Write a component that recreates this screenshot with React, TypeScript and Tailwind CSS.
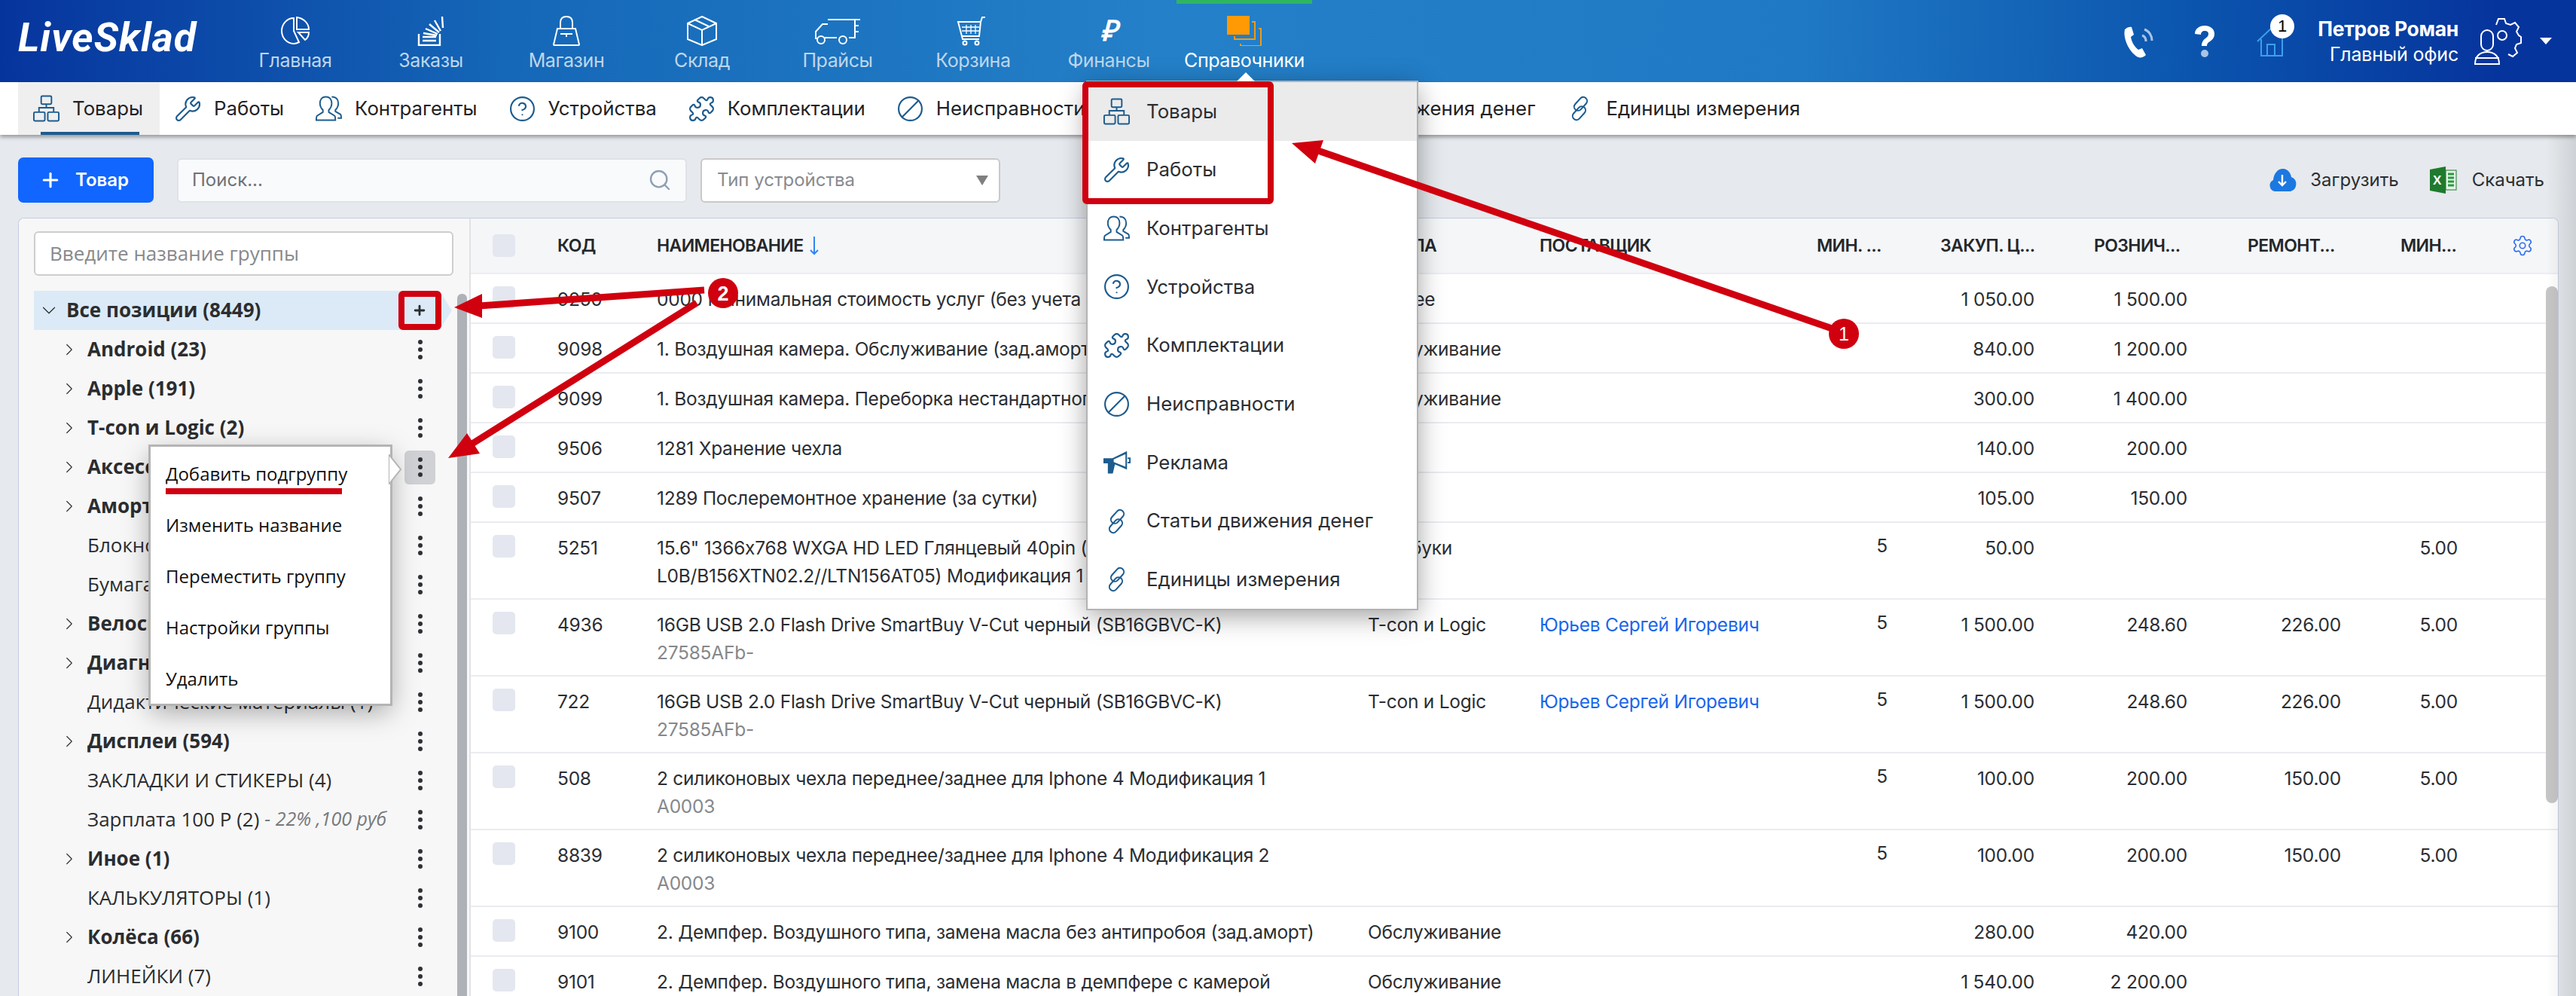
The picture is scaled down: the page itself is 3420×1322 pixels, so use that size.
import React from 'react';
import { Ban, ChevronDown, ChevronRight, CircleHelp, Plus, Puzzle, Search, Settings, Wrench } from 'lucide-react';

const proxima = "font-['Inter',sans-serif]";
const openSans = "font-['Open_Sans',sans-serif]";

// top navigation icons
function PieIcon() {
  return (
    <svg width="42" height="40" viewBox="0 0 42 40" fill="none" stroke="white" strokeWidth="2">
      <path d="M19 3C10 3 3 11 3 20s7 17 16 17c3 0 5-1 7-2l-7-15z" />
      <path d="M23 2c9 1 16 8 16 16H23z" />
      <path d="M25 22h14c0 4-2 8-5 10z" />
    </svg>
  );
}

function StackIcon() {
  return (
    <svg width="36" height="40" viewBox="0 0 36 40" fill="none" stroke="white" strokeWidth="2.4">
      <path d="M2 24v15h28V24" />
      <path d="M7 33h18M7 28h18M8 23l18 3M11 17l16 7M16 11l13 11M23 6l8 14M33 1l1 15" />
    </svg>
  );
}

function BagIcon() {
  return (
    <svg width="40" height="40" viewBox="0 0 40 40" fill="none" stroke="white" strokeWidth="2">
      <path d="M8 17h24l5 21a1 1 0 0 1-1 1H4a1 1 0 0 1-1-1z" />
      <path d="M12 17V9c0-5 3-8 8-8s8 3 8 8v8" />
      <path d="M12 24h16M20 24v4" />
    </svg>
  );
}

function BoxIcon() {
  return (
    <svg width="42" height="40" viewBox="0 0 42 40" fill="none" stroke="white" strokeWidth="2">
      <path d="M21 1l19 9v21L21 39 2 31V10z" />
      <path d="M2 10l19 9 19-9M21 19v20M11 5l19 9" />
    </svg>
  );
}

function TruckIcon() {
  return (
    <svg width="62" height="38" viewBox="0 0 62 38" fill="none" stroke="white" strokeWidth="2">
      <path d="M18 4h36v24h-8M30 28H14" />
      <path d="M18 10H11L2 20v9h3" />
      <circle cx="9" cy="31" r="5" />
      <circle cx="38" cy="31" r="5" />
      <path d="M54 4h7M54 12h5M54 20h5" />
    </svg>
  );
}

function CartIcon() {
  return (
    <svg width="44" height="40" viewBox="0 0 44 40" fill="none" stroke="white" strokeWidth="2">
      <path d="M2 8h30l-2 19H7z" />
      <path d="M32 8l2-6h4M7 27l1 4h22" />
      <path d="M13 12v12M19 12v12M25 12v12M7 15h23M7 20h23" strokeWidth="1.3" />
      <circle cx="11" cy="36" r="2.5" />
      <circle cx="27" cy="36" r="2.5" />
    </svg>
  );
}

function DirectoryIcon() {
  return (
    <svg width="46" height="40" viewBox="0 0 46 40" fill="none" stroke="#f59a0c" strokeWidth="2">
      <rect x="0" y="0" width="30" height="25" fill="#ff9a05" stroke="none" />
      <path d="M33 8h4v23H10v-4" />
      <path d="M42 17h3v23H18v-3" />
    </svg>
  );
}

// blue icons of the directory tabs
function BoxesIcon() {
  return (
    <svg width="37" height="38" viewBox="0 0 38 38" fill="none" stroke="#1d5c8f" strokeWidth="2">
      <rect x="12" y="2" width="14" height="11" rx="1.5" />
      <rect x="2" y="24" width="15" height="12" rx="1.5" />
      <rect x="21" y="24" width="15" height="12" rx="1.5" />
      <path d="M19 13v5M9 24v-6h20v6" />
    </svg>
  );
}

function PeopleIcon() {
  return (
    <svg width="37" height="38" viewBox="0 0 38 38" fill="none" stroke="#1d5c8f" strokeWidth="2">
      <path d="M15 3c-6 0-8 5-8 9 0 4 2 7 4 9v3l-8 5c-1 1-1 4-1 6h26c0-2 0-5-1-6l-8-5v-3c2-2 4-5 4-9 0-4-2-9-8-9z" />
      <path d="M23 3c6 0 9 4 9 9 0 4-2 7-4 9v2l7 4c1 1 1 3 1 5h-5" />
    </svg>
  );
}

function ChainIcon() {
  return (
    <svg width="37" height="38" viewBox="0 0 36 36" fill="none" stroke="#1d5c8f" strokeWidth="2">
      <rect x="9" y="7" width="20" height="10" rx="5" transform="rotate(-48 19 12)" />
      <rect x="7" y="19" width="20" height="10" rx="5" transform="rotate(-48 17 24)" />
    </svg>
  );
}

function Dots() {
  return (
    <span className="flex flex-col gap-[4px]">
      <span className="block h-[6px] w-[6px] rounded-full bg-[#2e3136]" />
      <span className="block h-[6px] w-[6px] rounded-full bg-[#2e3136]" />
      <span className="block h-[6px] w-[6px] rounded-full bg-[#2e3136]" />
    </span>
  );
}

const navItems = [
  { label: 'Главная', icon: <PieIcon /> },
  { label: 'Заказы', icon: <StackIcon /> },
  { label: 'Магазин', icon: <BagIcon /> },
  { label: 'Склад', icon: <BoxIcon /> },
  { label: 'Прайсы', icon: <TruckIcon /> },
  { label: 'Корзина', icon: <CartIcon /> },
  {
    label: 'Финансы',
    icon: <span className="text-[38px] leading-[40px] font-bold italic text-white font-['Liberation_Serif',serif]">₽</span>,
  },
];

const iconCls = 'w-[37px] h-[37px] text-[#1d5c8f]';

const directoryItems = [
  { label: 'Товары', icon: <BoxesIcon /> },
  { label: 'Работы', icon: <Wrench className={iconCls} strokeWidth={1.4} /> },
  { label: 'Контрагенты', icon: <PeopleIcon /> },
  { label: 'Устройства', icon: <CircleHelp className={iconCls} strokeWidth={1.4} /> },
  { label: 'Комплектации', icon: <Puzzle className={iconCls} strokeWidth={1.4} /> },
  { label: 'Неисправности', icon: <Ban className={`${iconCls} -scale-x-100`} strokeWidth={1.4} /> },
  {
    label: 'Реклама',
    icon: (
      <svg width="37" height="34" viewBox="0 0 38 34" fill="#1d5c8f" stroke="#1d5c8f" strokeWidth="2">
        <path d="M2 12h12l18-9v22l-18-8H2z" />
        <path d="M8 18h8l-3 13H8z" />
        <path d="M14 12l18-8v20l-18-7z" fill="white" />
        <path d="M34 11h3v6h-3" fill="none" />
      </svg>
    ),
  },
  { label: 'Статьи движения денег', icon: <ChainIcon /> },
  { label: 'Единицы измерения', icon: <ChainIcon /> },
];

const groups = [
  { name: 'Android (23)', bold: true },
  { name: 'Apple (191)', bold: true },
  { name: 'T-con и Logic (2)', bold: true },
  { name: 'Аксессуары (12)', bold: true, hover: true },
  { name: 'Амортизаторы (40)', bold: true },
  { name: 'Блокноты (3)' },
  { name: 'Бумага (2)' },
  { name: 'Велосипеды (5)', bold: true },
  { name: 'Диагностика (8)', bold: true },
  { name: 'Дидактические материалы (1)' },
  { name: 'Дисплеи (594)', bold: true },
  { name: 'ЗАКЛАДКИ И СТИКЕРЫ (4)' },
  { name: 'Зарплата 100 Р (2)', note: ' - 22% ,100 руб' },
  { name: 'Иное (1)', bold: true },
  { name: 'КАЛЬКУЛЯТОРЫ (1)' },
  { name: 'Колёса (66)', bold: true },
  { name: 'ЛИНЕЙКИ (7)' },
];

type Row = {
  code: string;
  name: string;
  name2?: string;
  sub?: string;
  group?: string;
  supplier?: string;
  min?: string;
  buy?: string;
  sell?: string;
  repair?: string;
  minPrice?: string;
};

const rows: Row[] = [
  { code: '9250', name: '0000 Минимальная стоимость услуг (без учета запчастей)', group: 'Прочее', buy: '1 050.00', sell: '1 500.00' },
  { code: '9098', name: '1. Воздушная камера. Обслуживание (зад.амортизатор)', group: 'Обслуживание', buy: '840.00', sell: '1 200.00' },
  { code: '9099', name: '1. Воздушная камера. Переборка нестандартного типа', group: 'Обслуживание', buy: '300.00', sell: '1 400.00' },
  { code: '9506', name: '1281 Хранение чехла', buy: '140.00', sell: '200.00' },
  { code: '9507', name: '1289 Послеремонтное хранение (за сутки)', buy: '105.00', sell: '150.00' },
  {
    code: '5251',
    name: '15.6" 1366x768 WXGA HD LED Глянцевый 40pin (N156BGE-',
    name2: 'L0B/B156XTN02.2//LTN156AT05) Модификация 1',
    group: 'Ноутбуки',
    min: '5',
    buy: '50.00',
    minPrice: '5.00',
  },
  { code: '4936', name: '16GB USB 2.0 Flash Drive SmartBuy V-Cut черный (SB16GBVC-K)', sub: '27585AFb-', group: 'T-con и Logic', supplier: 'Юрьев Сергей Игоревич', min: '5', buy: '1 500.00', sell: '248.60', repair: '226.00', minPrice: '5.00' },
  { code: '722', name: '16GB USB 2.0 Flash Drive SmartBuy V-Cut черный (SB16GBVC-K)', sub: '27585AFb-', group: 'T-con и Logic', supplier: 'Юрьев Сергей Игоревич', min: '5', buy: '1 500.00', sell: '248.60', repair: '226.00', minPrice: '5.00' },
  { code: '508', name: '2 силиконовых чехла переднее/заднее для Iphone 4 Модификация 1', sub: 'A0003', min: '5', buy: '100.00', sell: '200.00', repair: '150.00', minPrice: '5.00' },
  { code: '8839', name: '2 силиконовых чехла переднее/заднее для Iphone 4 Модификация 2', sub: 'A0003', min: '5', buy: '100.00', sell: '200.00', repair: '150.00', minPrice: '5.00' },
  { code: '9100', name: '2. Демпфер. Воздушного типа, замена масла без антипробоя (зад.аморт)', group: 'Обслуживание', buy: '280.00', sell: '420.00' },
  { code: '9101', name: '2. Демпфер. Воздушного типа, замена масла в демпфере с камерой', group: 'Обслуживание', buy: '1 540.00', sell: '2 200.00' },
];

function Header() {
  return (
    <header className="flex h-[109px] shrink-0 bg-[linear-gradient(90deg,#06349d_0%,#1568b8_20%,#2480c8_45%,#2079c4_70%,#0b55ae_85%,#06349d_97%)]">
      <div className="w-[302px] pl-[24px] pt-[20px] text-[54px] leading-[60px] font-bold italic text-white tracking-[1px] font-['Roboto',sans-serif]">
        LiveSklad
      </div>
      <nav className="flex">
        {navItems.map(item => (
          <div key={item.label} className="flex w-[180px] flex-col items-center pt-[21px]">
            <div className="flex h-[40px] items-center justify-center">{item.icon}</div>
            <div className={`mt-[4px] text-[25px] leading-[30px] text-[#bfd6ea] tracking-[-0.4px] ${proxima}`}>{item.label}</div>
          </div>
        ))}
        <div className="relative flex w-[180px] flex-col items-center border-t-[5px] border-[#2fb562] pt-[16px]">
          <DirectoryIcon />
          <div className={`mt-[4px] text-[25px] leading-[30px] text-white tracking-[-0.4px] ${proxima}`}>Справочники</div>
        </div>
      </nav>
      <div className="ml-auto flex items-center pr-[32px] text-white">
        <svg width="46" height="44" viewBox="0 0 46 44" fill="none" className="mr-[48px]">
          <path d="M3 6c3-3 7-4 9-3l3 10-4 3c1 7 5 13 10 17l5-2 5 9c-3 3-7 4-10 3C10 38 0 19 3 6z" fill="white" />
          <path d="M26 14c3 1 5 4 5 8M29 6c6 2 10 8 10 15" stroke="#a9c4e4" strokeWidth="3" />
        </svg>
        <svg width="30" height="44" viewBox="0 0 30 44" className="mr-[54px]">
          <path d="M2 12C2 5 8 1 15 1s13 4 13 11c0 5-3 8-6 10-3 2-4 3-4 6h-7c0-5 2-8 5-10 2-2 4-3 4-6s-2-4-5-4-5 2-5 5z" fill="white" />
          <ellipse cx="15" cy="38" rx="5" ry="5" fill="#a9c4e4" />
        </svg>
        <div className="relative mr-[43px] h-[40px] w-[38px]">
          <svg width="38" height="40" viewBox="0 0 38 40" fill="none" stroke="#3c9fee" strokeWidth="2">
            <path d="M1 20L20 2M6 17v22h28V12M14 39V24h10v15" />
          </svg>
          <span className="absolute -top-[16px] left-[18px] flex h-[32px] w-[32px] items-center justify-center rounded-full bg-white text-[22px] text-black font-['Liberation_Sans',sans-serif]">
            1
          </span>
        </div>
        <div className={`text-right ${proxima}`}>
          <div className="text-[26.5px] leading-[32px] font-bold tracking-[-0.3px]">Петров Роман</div>
          <div className="mt-[2px] text-[25px] leading-[32px] tracking-[-0.2px]">Главный офис</div>
        </div>
        <svg width="64" height="64" viewBox="0 0 64 64" fill="none" stroke="white" strokeWidth="2" className="ml-[20px]">
          <path d="M30 10l3-8h8l2 6 6 2 6-3 5 6-3 6 3 5 3 2v8l-6 2-2 5 3 6-6 5-6-3" />
          <circle cx="38" cy="24" r="6" />
          <rect x="10" y="17" width="16" height="27" rx="8" />
          <path d="M2 62c0-10 6-16 16-16s16 6 16 16zM2 54h32" />
        </svg>
        <span className="ml-[24px] h-0 w-0 border-x-[8px] border-t-[9px] border-x-transparent border-t-white" />
      </div>
    </header>
  );
}

function Tabs() {
  return (
    <div className={`relative z-10 flex h-[70px] shrink-0 bg-white pl-[24px] shadow-[0_3px_5px_rgba(0,0,0,0.35)] ${proxima}`}>
      {directoryItems.map((item, i) => (
        <div
          key={item.label}
          className={`relative flex h-full items-center gap-[16px] pl-[19px] pr-[22px] text-[25.8px] text-[#1f2226] ${i === 0 ? 'bg-[#efefef]' : ''}`}
        >
          {item.icon}
          <span className="whitespace-nowrap">{item.label}</span>
          {i === 0 && <span className="absolute bottom-0 left-[30px] h-[4px] w-[131px] bg-[#1d5c8f]" />}
        </div>
      ))}
    </div>
  );
}

function Toolbar() {
  return (
    <div className={`flex h-[110px] shrink-0 items-center px-[24px] pt-[10px] ${proxima}`}>
      <button className="flex h-[60px] w-[180px] items-center gap-[18px] rounded-[7px] bg-[#1066ff] pl-[28px] text-[24px] font-semibold text-white">
        <Plus className="h-[30px] w-[30px]" strokeWidth={2.5} />
        <span>Товар</span>
      </button>
      <div className="ml-[31px] flex h-[59px] w-[677px] items-center justify-between rounded-[6px] border-2 border-[#dfe2e6] bg-[#f9fafc] px-[18px] text-[24px] text-[#6d7178]">
        <span>Поиск...</span>
        <Search className="h-[32px] w-[32px] text-[#8fa0b3]" strokeWidth={1.8} />
      </div>
      <div className="ml-[18px] flex h-[59px] w-[398px] items-center justify-between rounded-[6px] border-2 border-[#c9c9c9] bg-white pl-[20px] pr-[14px] text-[24px] text-[#888b8f]">
        <span>Тип устройства</span>
        <span className="h-0 w-0 border-x-[8px] border-t-[13px] border-x-transparent border-t-[#7f7f7f]" />
      </div>
      <div className="ml-auto flex items-center pr-[18px] text-[24px] text-[#2b2e33]">
        <svg width="38" height="32" viewBox="0 0 38 32">
          <path d="M9 31a8 8 0 0 1-2-15C8 7 13 1 20 1c6 0 10 5 11 11a10 10 0 0 1-1 19z" fill="#1b78e0" />
          <path d="M19 9v14M14 18l5 5 5-5" stroke="white" strokeWidth="2.4" fill="none" />
        </svg>
        <span className="ml-[18px]">Загрузить</span>
        <svg width="36" height="36" viewBox="0 0 36 36" className="ml-[41px]">
          <path d="M0 4l21-4v36L0 32z" fill="#1f7a2e" />
          <rect x="21" y="5" width="14" height="26" fill="#e6f2e6" stroke="#1f7a2e" />
          <path d="M24 10h8M24 15h8M24 20h8M24 25h8" stroke="#2a9a40" strokeWidth="3" />
          <text x="4" y="24" fontSize="17" fontWeight="700" fill="white" fontFamily="Liberation Sans">X</text>
        </svg>
        <span className="ml-[20px]">Скачать</span>
      </div>
    </div>
  );
}

function Sidebar() {
  return (
    <aside className={`relative flex h-[1040px] w-[600px] shrink-0 flex-col overflow-hidden border-r-2 border-[#e0e2e6] bg-[#f7f7f7] pl-[20px] pt-[17px] ${openSans}`}>
      <div className="flex h-[59px] w-[557px] items-center rounded-[6px] border-2 border-[#cdcdcd] bg-white pl-[19px] text-[26px] text-[#87898c]">
        Введите название группы
      </div>
      <div className="mt-[20px] flex h-[52px] w-[555px] shrink-0 items-center bg-[#dbeaf6] pl-[5px] text-[26px] font-bold text-[#2b2d30] [clip-path:polygon(0_0,97%_0,100%_50%,97%_100%,0_100%)]">
        <ChevronDown className="h-[30px] w-[30px]" strokeWidth={1} />
        <span className="ml-[8px] -mt-[2px]">Все позиции (8449)</span>
        <Plus className="ml-auto mr-[33px] h-[20px] w-[20px]" strokeWidth={3.4} />
      </div>
      {groups.map(g => (
        <div key={g.name} className="flex h-[52px] w-[555px] shrink-0 items-center text-[26px] text-[#2b2d30]">
          <span className="flex w-[71px] justify-end pr-[11px]">
            {g.bold && <ChevronRight className="h-[26px] w-[26px] text-[#333]" strokeWidth={1.1} />}
          </span>
          <span className={`-mt-[2px] whitespace-nowrap ${g.bold ? 'font-bold' : ''}`}>{g.name}</span>
          {g.note && <span className="-mt-[2px] whitespace-nowrap pl-[7px] text-[25px] italic text-[#77797c]">{g.note}</span>}
          <span className={`ml-auto mr-[22px] flex h-[45px] w-[41px] shrink-0 items-center justify-center rounded-[6px] ${g.hover ? 'bg-[#cfd1d4]' : ''}`}>
            <Dots />
          </span>
        </div>
      ))}
      <div className="absolute left-[582px] top-[100px] h-[950px] w-[13px] rounded-t-[6px] bg-[#aeb2b8]" />
    </aside>
  );
}

function ProductTable() {
  return (
    <section className={`min-w-0 flex-1 overflow-hidden text-[24.5px] text-[#2b2e33] tracking-[-0.25px] ${proxima}`}>
      <div className="grid h-[74px] grid-cols-[115px_132px_944px_228px_368px_164px_204px_204px_203px_1fr] items-center border-b-2 border-[#eceef3] bg-[#f5f6f8] text-[23px] font-semibold uppercase tracking-[-0.6px] text-[#24272b]">
        <span className="ml-[29px] block h-[30px] w-[30px] rounded-[5px] bg-[#e4e7ef]" />
        <span>Код</span>
        <span className="flex items-center gap-[8px]">
          Наименование
          <svg width="12" height="26" viewBox="0 0 12 26" fill="none" stroke="#2f86f5" strokeWidth="2">
            <path d="M6 1v23M1 19l5 5 5-5" />
          </svg>
        </span>
        <span>Группа</span>
        <span>Поставщик</span>
        <span>Мин. ...</span>
        <span>Закуп. ц...</span>
        <span>Рознич...</span>
        <span>Ремонт...</span>
        <span className="flex items-center justify-between pr-[32px]">
          Мин...
          <Settings className="h-[30px] w-[30px] text-[#2f6ff0]" strokeWidth={1.3} />
        </span>
      </div>
      {rows.map(row => (
        <div
          key={row.code}
          className="grid min-h-[66px] grid-cols-[115px_132px_944px_228px_368px_94px_195px_203px_204px_155px_1fr] border-b-2 border-[#ebecf2] pb-[11px] pt-[15px] leading-[37px]"
        >
          <span className="ml-[29px] mt-px block h-[30px] w-[30px] rounded-[5px] bg-[#e4e7ef]" />
          <span>{row.code}</span>
          <div className="whitespace-nowrap">
            <div>{row.name}</div>
            {row.name2 && <div>{row.name2}</div>}
            {row.sub && <div className="text-[#85888c]">{row.sub}</div>}
          </div>
          <span>{row.group}</span>
          <span className="text-[#1a66ea]">{row.supplier}</span>
          <span className="-mt-[3px] text-right">{row.min}</span>
          <span className="text-right">{row.buy}</span>
          <span className="text-right">{row.sell}</span>
          <span className="text-right">{row.repair}</span>
          <span className="text-right">{row.minPrice}</span>
        </div>
      ))}
      <div className="absolute left-[3380px] top-[380px] h-[686px] w-[16px] rounded-[8px] bg-[#c6c6c6]" />
    </section>
  );
}

function DirectoryMenu() {
  return (
    <div className={`absolute left-[1444px] top-[109px] z-30 w-[437px] bg-white shadow-[0_0_0_2px_#b3b3b3,0_8px_34px_rgba(0,0,0,0.4)] ${proxima}`}>
      <span className="absolute -top-[13px] left-[197px] h-0 w-0 border-x-[13px] border-b-[13px] border-x-transparent border-b-white" />
      {directoryItems.map((item, i) => (
        <div
          key={item.label}
          className={`flex h-[77.7px] items-center gap-[21px] pl-[20px] text-[25.8px] text-[#2b2e33] ${i === 0 ? 'bg-[#ebebeb]' : ''}`}
        >
          {item.icon}
          <span className="whitespace-nowrap">{item.label}</span>
        </div>
      ))}
    </div>
  );
}

function GroupMenu() {
  const items = ['Добавить подгруппу', 'Изменить название', 'Переместить группу', 'Настройки группы', 'Удалить'];
  return (
    <div className={`absolute left-[200px] top-[593px] z-20 h-[341px] w-[318px] bg-white pt-[2px] text-[24px] text-[#111] shadow-[0_0_0_3px_#b4b4b4,0_10px_34px_rgba(0,0,0,0.35)] ${openSans}`}>
      {items.map(t => (
        <div key={t} className="flex h-[68px] items-center pl-[20px]">{t}</div>
      ))}
      <span className="absolute left-[20px] top-[55px] h-[8px] w-[234px] bg-[#d0000f]" />
      <svg width="18" height="40" viewBox="0 0 18 40" className="absolute -right-[16px] top-[10px]">
        <path d="M0 0L16 20 0 40z" fill="white" stroke="#b4b4b4" strokeWidth="2" />
        <path d="M-2 2h2v36h-2z" fill="white" />
      </svg>
    </div>
  );
}

// red annotations laid over the screenshot
function Annotations() {
  return (
    <svg className="absolute left-0 top-0 z-40" width="3420" height="1322" viewBox="0 0 3420 1322" fill="none">
      <rect x="1441" y="112" width="246" height="155" stroke="#d0000f" strokeWidth="8" rx="2" />
      <rect x="533" y="390" width="49" height="44" stroke="#d0000f" strokeWidth="8" rx="2" />
      <path d="M1750 200L2432 436" stroke="#d0000f" strokeWidth="9" />
      <path d="M1715 190L1757 186 1746 217z" fill="#d0000f" />
      <circle cx="2448" cy="443" r="20" fill="#d0000f" />
      <path d="M636 406L935 385" stroke="#d0000f" strokeWidth="9" />
      <path d="M603 408L640 390 640 422z" fill="#d0000f" />
      <path d="M925 402L622 592" stroke="#d0000f" strokeWidth="9" />
      <path d="M595 608L620 575 637 602z" fill="#d0000f" />
      <circle cx="960" cy="389" r="20" fill="#d0000f" />
      <text x="2448" y="452" textAnchor="middle" fontSize="25" fill="white" fontFamily="Liberation Sans">1</text>
      <text x="960" y="399" textAnchor="middle" fontSize="27" fontWeight="700" fill="white" fontFamily="Liberation Sans">2</text>
    </svg>
  );
}

export default function App() {
  return (
    <div className="relative flex h-[1322px] w-[3420px] flex-col overflow-hidden bg-[#e6e9ed]">
      <Header />
      <Tabs />
      <Toolbar />
      <main className="ml-[24px] flex w-[3373px] overflow-hidden rounded-t-[8px] border border-b-0 border-[#c5cde0] bg-white">
        <Sidebar />
        <ProductTable />
      </main>
      <div className="absolute right-0 top-[109px] h-[1213px] w-[40px] bg-gradient-to-r from-transparent to-black/10" />
      <DirectoryMenu />
      <GroupMenu />
      <Annotations />
    </div>
  );
}
